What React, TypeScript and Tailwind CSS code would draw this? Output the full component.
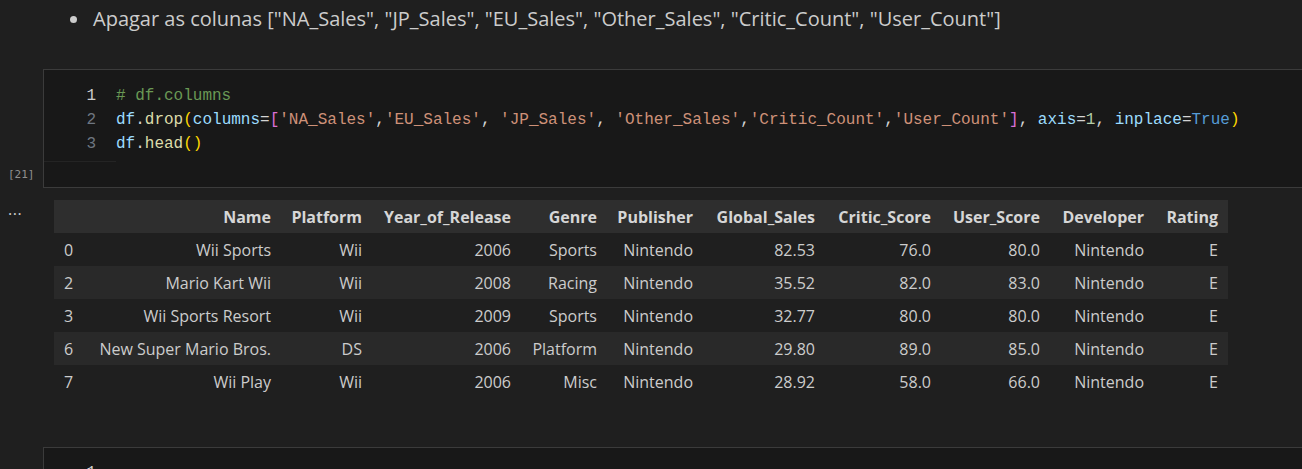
import React from "react"

const rows = [
  ["0", "Wii Sports", "Wii", "2006", "Sports", "Nintendo", "82.53", "76.0", "80.0", "Nintendo", "E"],
  ["2", "Mario Kart Wii", "Wii", "2008", "Racing", "Nintendo", "35.52", "82.0", "83.0", "Nintendo", "E"],
  ["3", "Wii Sports Resort", "Wii", "2009", "Sports", "Nintendo", "32.77", "80.0", "80.0", "Nintendo", "E"],
  ["6", "New Super Mario Bros.", "DS", "2006", "Platform", "Nintendo", "29.80", "89.0", "85.0", "Nintendo", "E"],
  ["7", "Wii Play", "Wii", "2006", "Misc", "Nintendo", "28.92", "58.0", "66.0", "Nintendo", "E"],
]

const headers = ["", "Name", "Platform", "Year_of_Release", "Genre", "Publisher", "Global_Sales", "Critic_Score", "User_Score", "Developer", "Rating"]
const widths = ["w-[30px]", "w-[197px]", "w-[91px]", "w-[149px]", "w-[86px]", "w-[96px]", "w-[122px]", "w-[116px]", "w-[109px]", "w-[104px]", "w-[74px]"]

const C = {
  v: "text-[#9cdcfe]",
  f: "text-[#dcdcaa]",
  p: "text-[#d4d4d4]",
  b1: "text-[#ffd700]",
  b2: "text-[#da70d6]",
  s: "text-[#ce9178]",
  n: "text-[#b5cea8]",
  k: "text-[#569cd6]",
}

function CodeLine({ num, active, children }: { num: number; active?: boolean; children: React.ReactNode }) {
  return (
    <div className="flex h-6 items-center">
      <span className={`w-[52px] text-right ${active ? "text-[#cccccc]" : "text-[#6e7681]"}`}>{num}</span>
      <span className="ml-[20px] whitespace-pre">{children}</span>
    </div>
  )
}

export default function App() {
  return (
    <div className="w-[1302px] h-[469px] overflow-hidden bg-[#1f1f1f] text-[#cccccc] font-['Open_Sans',sans-serif]">
      {/* markdown */}
      <div className="flex items-center h-[38px] pl-[70px]">
        <span className="w-[7px] h-[7px] rounded-full bg-[#cccccc]" />
        <span className="ml-[16px] text-[20px]">
          Apagar as colunas ["NA_Sales", "JP_Sales", "EU_Sales", "Other_Sales", "Critic_Count", "User_Count"]
        </span>
      </div>

      {/* code cell */}
      <div className="flex mt-[31px]">
        <div className="w-[43px] shrink-0 flex flex-col justify-end pb-[5px]">
          <span className="pl-[8px] text-[11px] text-[#8f8f8f] font-['DejaVu_Sans_Mono',monospace]">[21]</span>
        </div>
        <div className="w-[1300px] shrink-0 border border-[#3b3b3b] bg-[#181818]">
          <div className="pt-[14px] pb-[5px] font-['Liberation_Mono',monospace] text-[16px]">
            <CodeLine num={1} active>
              <span className="text-[#6a9955]"># df.columns</span>
            </CodeLine>
            <CodeLine num={2}>
              <span className={C.v}>df</span>
              <span className={C.p}>.</span>
              <span className={C.f}>drop</span>
              <span className={C.b1}>(</span>
              <span className={C.v}>columns</span>
              <span className={C.p}>=</span>
              <span className={C.b2}>[</span>
              <span className={C.s}>'NA_Sales'</span>
              <span className={C.p}>,</span>
              <span className={C.s}>'EU_Sales'</span>
              <span className={C.p}>, </span>
              <span className={C.s}>'JP_Sales'</span>
              <span className={C.p}>, </span>
              <span className={C.s}>'Other_Sales'</span>
              <span className={C.p}>,</span>
              <span className={C.s}>'Critic_Count'</span>
              <span className={C.p}>,</span>
              <span className={C.s}>'User_Count'</span>
              <span className={C.b2}>]</span>
              <span className={C.p}>, </span>
              <span className={C.v}>axis</span>
              <span className={C.p}>=</span>
              <span className={C.n}>1</span>
              <span className={C.p}>, </span>
              <span className={C.v}>inplace</span>
              <span className={C.p}>=</span>
              <span className={C.k}>True</span>
              <span className={C.b1}>)</span>
            </CodeLine>
            <CodeLine num={3}>
              <span className={C.v}>df</span>
              <span className={C.p}>.</span>
              <span className={C.f}>head</span>
              <span className={C.b1}>()</span>
            </CodeLine>
          </div>
          <div className="w-[72px] border-t border-[#242424] h-[26px]" />
        </div>
      </div>

      {/* output */}
      <div className="flex mt-[12px]">
        <div className="w-[54px] shrink-0 pl-[8px] pt-[6px] text-[16px] leading-none tracking-[0.5px] text-[#cccccc]">···</div>
        <table className="table-fixed w-[1174px] border-collapse text-[16px]">
          <colgroup>
            {widths.map((w, i) => (
              <col key={i} className={w} />
            ))}
          </colgroup>
          <thead>
            <tr className="h-[33px] bg-[#2e2e2e]">
              {headers.map((h, i) => (
                <th key={i} className="px-[10px] text-right font-bold text-[#d6d6d6] whitespace-nowrap">
                  {h}
                </th>
              ))}
            </tr>
          </thead>
          <tbody>
            {rows.map((r, ri) => (
              <tr key={ri} className={`h-[33px] ${ri % 2 === 1 ? "bg-[#292929]" : ""}`}>
                {r.map((c, ci) => (
                  <td key={ci} className={`px-[10px] whitespace-nowrap ${ci === 0 ? "text-left" : "text-right"}`}>
                    {c}
                  </td>
                ))}
              </tr>
            ))}
          </tbody>
        </table>
      </div>

      {/* next cell */}
      <div className="ml-[43px] mt-[49px] w-[1300px] h-[40px] border border-[#3b3b3b] bg-[#181818] font-['Liberation_Mono',monospace] text-[16px]">
        <div className="pt-[13px]">
          <CodeLine num={1} active>
            <span />
          </CodeLine>
        </div>
      </div>
    </div>
  )
}
